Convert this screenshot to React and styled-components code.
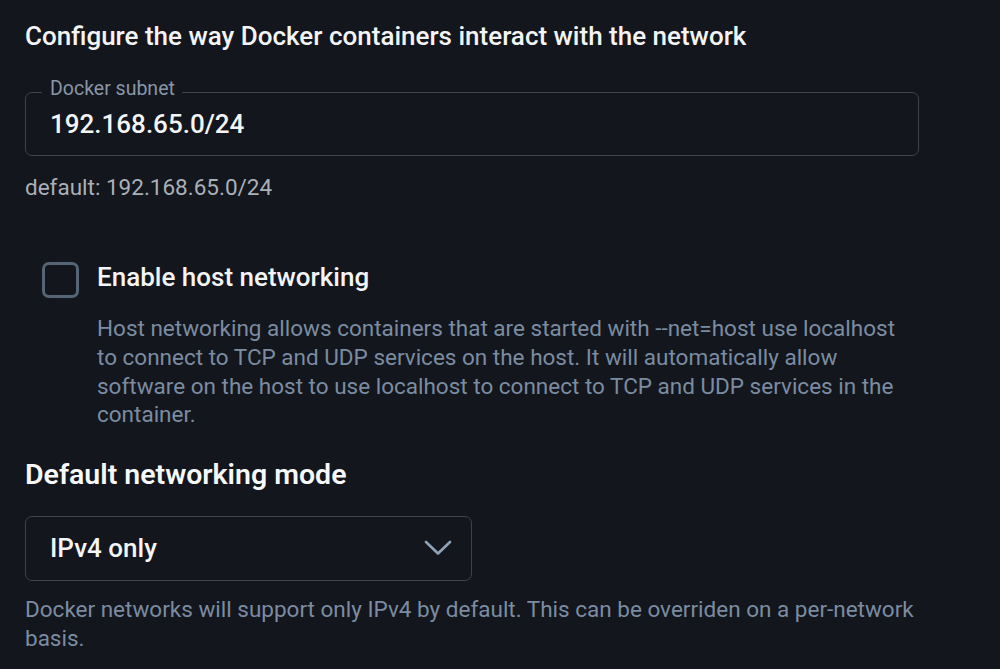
import React from "react";
import styled, { createGlobalStyle } from "styled-components";

const Global = createGlobalStyle`
  html, body { margin: 0; padding: 0; background: #13161c; }
  body { font-family: Roboto, "Liberation Sans", sans-serif; -webkit-font-smoothing: antialiased; }
  * { box-sizing: border-box; }
`;

const Page = styled.div`
  width: 1000px;
  height: 669px;
  overflow: hidden;
  background: #13161c;
  padding: 20px 0 0 25px;
  display: flex;
  flex-direction: column;
`;

const Content = styled.div`
  width: 894px;
  display: flex;
  flex-direction: column;
`;

const Title = styled.div`
  color: #f3f4f6;
  font-size: 26px;
  font-weight: 500;
  line-height: 32px;
`;

const Outlined = styled.div`
  position: relative;
  margin-top: ${(p) => p.$mt || "0"};
  width: ${(p) => p.$w || "100%"};
  height: 64.5px;
  border: 1.5px solid #3f4349;
  border-radius: 7px;
  padding: 0 19px 0 24px;
  display: flex;
  align-items: center;
  justify-content: space-between;
`;

const FloatLabel = styled.span`
  position: absolute;
  left: 16px;
  top: -16px;
  padding: 0 7px 0 8px;
  background: #13161c;
  color: #8896a8;
  font-size: 19.5px;
  line-height: 24px;
`;

const Value = styled.span`
  color: #f4f5f7;
  font-size: 26px;
  font-weight: 500;
  line-height: 32px;
`;

const Helper = styled.div`
  color: ${(p) => p.$tone || "#7b8ca2"};
  font-size: 22.5px;
  line-height: 28.67px;
  margin-top: ${(p) => p.$mt || "0"};
  margin-left: ${(p) => p.$indent || "0"};
`;

const CheckRow = styled.label`
  display: flex;
  align-items: center;
  gap: 18px;
  margin-top: 60px;
  padding-left: 17px;
`;

const Box = styled.span`
  width: 37px;
  height: 36px;
  border: 3px solid #566576;
  border-radius: 7px;
  flex-shrink: 0;
`;

const CheckLabel = styled.span`
  color: #f3f4f6;
  font-size: 26px;
  font-weight: 500;
  line-height: 32px;
  margin-top: -5px;
`;

const Heading = styled.div`
  color: #f7f8fa;
  font-size: 28.5px;
  font-weight: 600;
  margin-top: 27.7px;
  line-height: 36px;
`;

const Chevron = () => (
  <svg width="28" height="16" viewBox="0 0 28 16" fill="none">
    <path d="M2 2 L14 13.5 L26 2" stroke="#8fa3b8" strokeWidth="2.6" strokeLinecap="round" strokeLinejoin="round" />
  </svg>
);

export default function App() {
  return (
    <Page>
      <Global />
      <Content>
        <Title>Configure the way Docker containers interact with the network</Title>
        <Outlined $mt="39.5px">
          <FloatLabel>Docker subnet</FloatLabel>
          <Value>192.168.65.0/24</Value>
        </Outlined>
        <Helper $tone="#aab0b8" $mt="17px">default: 192.168.65.0/24</Helper>
        <CheckRow>
          <Box />
          <CheckLabel>Enable host networking</CheckLabel>
        </CheckRow>
        <Helper $indent="72px" $mt="16.7px">
          Host networking allows containers that are started with --net=host use localhost to connect to TCP and UDP services on the host. It will automatically allow software on the host to use localhost to connect to TCP and UDP services in the container.
        </Helper>
        <Heading>Default networking mode</Heading>
        <Outlined $mt="23.5px" $w="447px">
          <Value>IPv4 only</Value>
          <Chevron />
        </Outlined>
        <Helper $mt="14.7px">
          Docker networks will support only IPv4 by default. This can be overriden on a per-network basis.
        </Helper>
      </Content>
    </Page>
  );
}
